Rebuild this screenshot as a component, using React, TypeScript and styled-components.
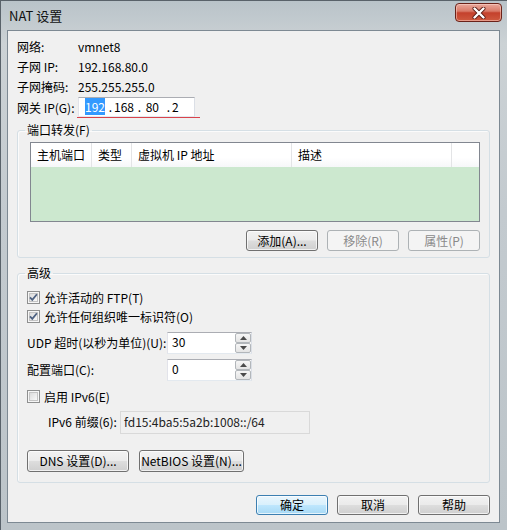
import React from "react";
import styled, { createGlobalStyle } from "styled-components";

const GlobalStyle = createGlobalStyle`
  *, *::before, *::after { box-sizing: border-box; }
  html, body { margin: 0; padding: 0; background: #ffffff; }
  body {
    font-family: "Noto Sans CJK SC", "Liberation Sans", sans-serif;
    font-size: 12px;
    line-height: 16px;
    color: #000;
  }
`;

const Window = styled.div`
  width: 507px;
  height: 530px;
  display: flex;
  flex-direction: column;
  border-left: 1px solid #59626a;
  border-top: 1px solid #59626a;
  background: linear-gradient(
    180deg,
    #b9c3c9 0%,
    #ccd2d5 8%,
    #c3cacf 40%,
    #bcc4c9 100%
  );
`;

const TitleBar = styled.div`
  height: 29px;
  display: flex;
  justify-content: space-between;
  align-items: flex-start;
  padding: 0 5px 0 8px;
`;

const Title = styled.div`
  font-size: 13px;
  line-height: 16px;
  padding-top: 7px;
  color: #111;
`;

const CloseButton = styled.div`
  width: 47px;
  height: 19px;
  margin-top: 2px;
  border: 1px solid #6a2219;
  border-radius: 4px;
  background: linear-gradient(
    180deg,
    #eaa89c 0%,
    #d97a68 42%,
    #c4412c 52%,
    #cf5a3f 100%
  );
  box-shadow: inset 0 0 0 1px rgba(255, 220, 210, 0.5);
  display: flex;
  align-items: center;
  justify-content: center;
`;

const Client = styled.div`
  flex: 1;
  margin: 0 7px 7px 6px;
  border: 1px solid #7d8993;
  background: #f0f0f0;
  padding: 6px 9px 0;
  display: flex;
  flex-direction: column;
`;

const InfoRow = styled.div<{ $h?: number }>`
  display: flex;
  align-items: center;
  height: ${(p) => p.$h ?? 20}px;
`;

const InfoLabel = styled.div`
  width: 61px;
  flex-shrink: 0;
`;

const RedMark = styled.div`
  margin-left: -1px;
  padding: 0 5px 0 1px;
  border-bottom: 1px solid #d9434c;
`;

const IpBox = styled.div`
  width: 117px;
  height: 20px;
  background: #fff;
  border: 1px solid;
  border-color: #abadb3 #dbdfe6 #e3e9ef #e2e3ea;
  display: flex;
  align-items: center;
  padding-left: 6px;
`;

const IpSeg = styled.div`
  width: 22px;
  line-height: 14px;
`;

const IpDot = styled.div`
  width: 7px;
  text-align: center;
  line-height: 14px;
`;

const Selected = styled.span`
  background: #3399ff;
  color: #fff;
`;

const GroupBox = styled.fieldset<{ $top: number }>`
  margin: ${(p) => p.$top}px 0 0;
  padding: 0;
  min-width: 0;
  border: 1px solid #d5dfe5;
  border-radius: 3px;
  box-shadow: inset 1px 1px 0 #fbfbfb;
`;

const Legend = styled.legend`
  margin-left: 7px;
  padding: 0 2px;
  line-height: 16px;
`;

const GroupBody = styled.div<{ $pad: string }>`
  padding: ${(p) => p.$pad};
  display: flex;
  flex-direction: column;
`;

const ListView = styled.div`
  height: 80px;
  border: 1px solid #828790;
  background: #cce8cf;
  display: flex;
  flex-direction: column;
`;

const ListHeader = styled.div`
  height: 24px;
  display: grid;
  grid-template-columns: 61px 40px 160px 160px 1fr;
  background: linear-gradient(180deg, #ffffff 0%, #ffffff 60%, #f6f7f9 100%);
`;

const HeaderCell = styled.div<{ $last?: boolean }>`
  display: flex;
  align-items: center;
  padding-left: 6px;
  border-right: ${(p) => (p.$last ? "none" : "1px solid #e3e4e6")};
  white-space: nowrap;
`;

const ButtonRow = styled.div<{ $top: number; $justify?: string; $gap?: number }>`
  display: flex;
  justify-content: ${(p) => p.$justify ?? "flex-end"};
  gap: ${(p) => p.$gap ?? 9}px;
  margin-top: ${(p) => p.$top}px;
`;

const Button = styled.div<{
  $w?: number;
  $h?: number;
  $disabled?: boolean;
  $default?: boolean;
}>`
  width: ${(p) => p.$w ?? 72}px;
  height: ${(p) => p.$h ?? 21}px;
  border: 1px solid
    ${(p) => (p.$disabled ? "#adb2b5" : p.$default ? "#3c7fb1" : "#707070")};
  border-radius: 3px;
  background: ${(p) =>
    p.$disabled
      ? "#f4f4f4"
      : p.$default
      ? "linear-gradient(180deg, #eaf6fd 0%, #d9f0fc 48%, #bee6fd 52%, #a7d9f5 100%)"
      : "linear-gradient(180deg, #f2f2f2 0%, #ebebeb 48%, #dddddd 52%, #cfcfcf 100%)"};
  box-shadow: inset 0 0 0 1px
    ${(p) => (p.$disabled ? "transparent" : "rgba(255,255,255,0.7)")};
  color: ${(p) => (p.$disabled ? "#8a8a8a" : "#000")};
  display: flex;
  align-items: center;
  justify-content: center;
  white-space: nowrap;
`;

const CheckRow = styled.div<{ $top?: number }>`
  display: flex;
  align-items: center;
  gap: 4px;
  height: 19px;
  margin-top: ${(p) => p.$top ?? 0}px;
`;

const FieldRow = styled.div<{ $top: number; $indent?: number }>`
  display: flex;
  align-items: center;
  height: 22px;
  margin-top: ${(p) => p.$top}px;
  padding-left: ${(p) => p.$indent ?? 0}px;
`;

const FieldLabel = styled.div<{ $w: number }>`
  width: ${(p) => p.$w}px;
  flex-shrink: 0;
  white-space: nowrap;
`;

const NumberBox = styled.div`
  width: 85px;
  height: 22px;
  background: #fff;
  border: 1px solid;
  border-color: #abadb3 #dbdfe6 #e3e9ef #e2e3ea;
  display: flex;
`;

const NumberValue = styled.div`
  flex: 1;
  padding-left: 4px;
  line-height: 18px;
`;

const Spinner = styled.div`
  width: 16px;
  display: flex;
  flex-direction: column;
  gap: 0;
  padding: 0 0 0 0;
`;

const SpinButton = styled.div`
  flex: 1;
  border: 1px solid #b2b6ba;
  border-radius: 2px;
  background: linear-gradient(180deg, #f6f6f6 0%, #e4e4e4 100%);
  display: flex;
  align-items: center;
  justify-content: center;
`;

const ReadOnlyField = styled.div`
  width: 190px;
  height: 23px;
  border: 1px solid #d9d9d9;
  background: #f0f0f0;
  padding-left: 3px;
  display: flex;
  align-items: center;
  color: #222;
`;

const CheckBox: React.FC<{ checked?: boolean }> = ({ checked }) => (
  <svg width="13" height="13" viewBox="0 0 13 13">
    <defs>
      <linearGradient id="cbFill" x1="0" y1="0" x2="1" y2="1">
        <stop offset="0" stopColor="#d9d9d9" />
        <stop offset="1" stopColor="#fbfbfb" />
      </linearGradient>
    </defs>
    <rect x="0.5" y="0.5" width="12" height="12" fill="#f6f6f6" stroke="#8e8f8f" />
    <rect x="2.5" y="2.5" width="8" height="8" fill="url(#cbFill)" stroke="#c4c4c4" />
    {checked && (
      <path
        d="M3 6.4 L5.3 8.9 L9.9 3.3"
        stroke="#4e6282"
        strokeWidth="1.8"
        fill="none"
      />
    )}
  </svg>
);

const Arrow: React.FC<{ up?: boolean }> = ({ up }) => (
  <svg width="7" height="4" viewBox="0 0 7 4">
    <path d={up ? "M0 4 L3.5 0 L7 4 Z" : "M0 0 L3.5 4 L7 0 Z"} fill="#4a4a4a" />
  </svg>
);

const NumberField: React.FC<{ value: string }> = ({ value }) => (
  <NumberBox>
    <NumberValue>{value}</NumberValue>
    <Spinner>
      <SpinButton>
        <Arrow up />
      </SpinButton>
      <SpinButton>
        <Arrow />
      </SpinButton>
    </Spinner>
  </NumberBox>
);

const columns = ["主机端口", "类型", "虚拟机 IP 地址", "描述", ""];

export default function App() {
  return (
    <>
      <GlobalStyle />
      <Window>
        <TitleBar>
          <Title>NAT 设置</Title>
          <CloseButton>
            <svg width="14" height="12" viewBox="0 0 14 12">
              <path
                d="M2.5 1.5 L11.5 10.5 M11.5 1.5 L2.5 10.5"
                stroke="#5a1a12"
                strokeWidth="4"
                strokeLinecap="round"
              />
              <path
                d="M2.5 1.5 L11.5 10.5 M11.5 1.5 L2.5 10.5"
                stroke="#ffffff"
                strokeWidth="2.4"
                strokeLinecap="round"
              />
            </svg>
          </CloseButton>
        </TitleBar>

        <Client>
          <InfoRow>
            <InfoLabel>网络:</InfoLabel>
            <div>vmnet8</div>
          </InfoRow>
          <InfoRow>
            <InfoLabel>子网 IP:</InfoLabel>
            <div>192.168.80.0</div>
          </InfoRow>
          <InfoRow>
            <InfoLabel>子网掩码:</InfoLabel>
            <div>255.255.255.0</div>
          </InfoRow>
          <InfoRow $h={21}>
            <InfoLabel>网关 IP(G):</InfoLabel>
            <RedMark>
              <IpBox>
                <IpSeg>
                  <Selected>192</Selected>
                </IpSeg>
                <IpDot>.</IpDot>
                <IpSeg>168</IpSeg>
                <IpDot>.</IpDot>
                <IpSeg>&nbsp;80</IpSeg>
                <IpDot>.</IpDot>
                <IpSeg>2</IpSeg>
              </IpBox>
            </RedMark>
          </InfoRow>

          <GroupBox $top={4}>
            <Legend>端口转发(F)</Legend>
            <GroupBody $pad="4px 9px 6px 12px">
              <ListView>
                <ListHeader>
                  {columns.map((c, i) => (
                    <HeaderCell key={i} $last={i === columns.length - 1}>
                      {c}
                    </HeaderCell>
                  ))}
                </ListHeader>
              </ListView>
              <ButtonRow $top={8}>
                <Button>添加(A)...</Button>
                <Button $disabled>移除(R)</Button>
                <Button $disabled>属性(P)</Button>
              </ButtonRow>
            </GroupBody>
          </GroupBox>

          <GroupBox $top={7}>
            <Legend>高级</Legend>
            <GroupBody $pad="7px 9px 10px 9px">
              <CheckRow>
                <CheckBox checked />
                <span>允许活动的 FTP(T)</span>
              </CheckRow>
              <CheckRow>
                <CheckBox checked />
                <span>允许任何组织唯一标识符(O)</span>
              </CheckRow>
              <FieldRow $top={6}>
                <FieldLabel $w={140}>UDP 超时(以秒为单位)(U):</FieldLabel>
                <NumberField value="30" />
              </FieldRow>
              <FieldRow $top={5}>
                <FieldLabel $w={140}>配置端口(C):</FieldLabel>
                <NumberField value="0" />
              </FieldRow>
              <CheckRow $top={6}>
                <CheckBox />
                <span>启用 IPv6(E)</span>
              </CheckRow>
              <FieldRow $top={5} $indent={21}>
                <FieldLabel $w={72}>IPv6 前缀(6):</FieldLabel>
                <ReadOnlyField>fd15:4ba5:5a2b:1008::/64</ReadOnlyField>
              </FieldRow>
              <ButtonRow $top={17} $justify="flex-start" $gap={10}>
                <Button $w={102} $h={22}>
                  DNS 设置(D)...
                </Button>
                <Button $w={105} $h={22}>
                  NetBIOS 设置(N)...
                </Button>
              </ButtonRow>
            </GroupBody>
          </GroupBox>

          <ButtonRow $top={12}>
            <Button $h={20} $default>
              确定
            </Button>
            <Button $h={20}>取消</Button>
            <Button $h={20}>帮助</Button>
          </ButtonRow>
        </Client>
      </Window>
    </>
  );
}
